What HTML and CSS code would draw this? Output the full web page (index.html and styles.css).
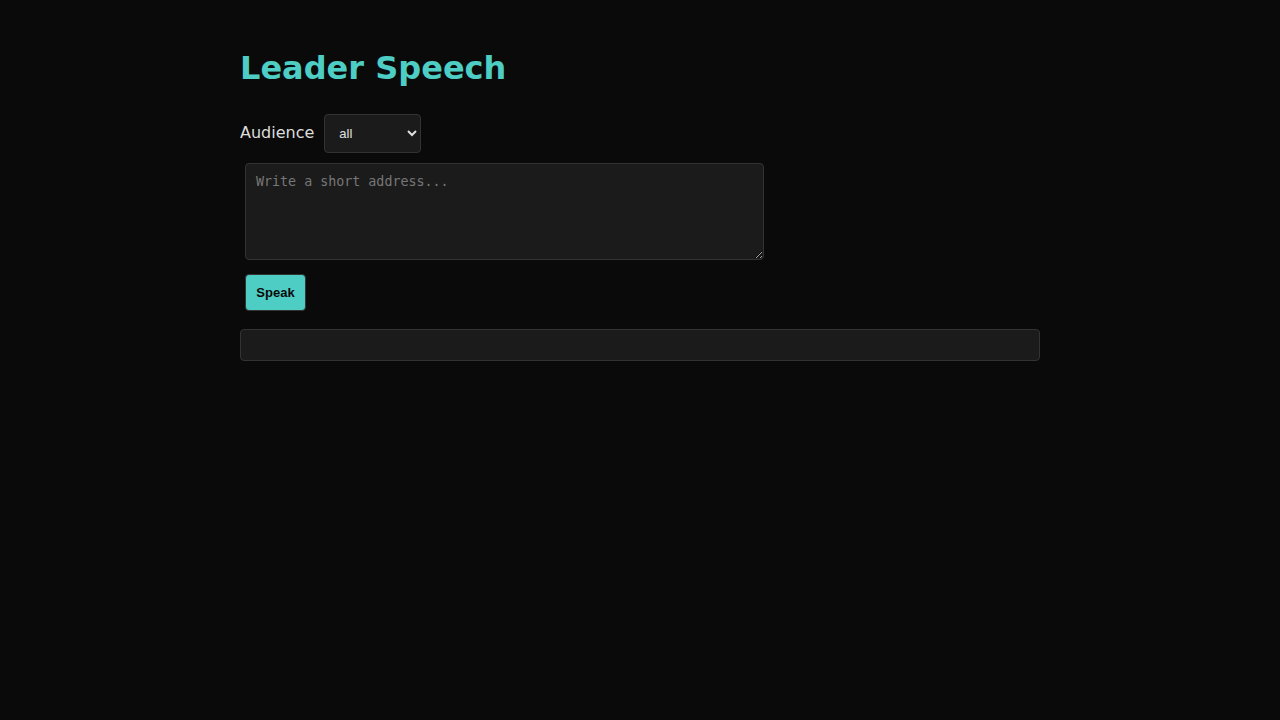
FILE: index.html
```html
<!DOCTYPE html>
<html>
<head>
<meta charset="utf-8">
<title>Leader Speech</title>
<link rel="stylesheet" href="styles.css">
</head>
<body>
<main class="page">
  <h1 class="title">Leader Speech</h1>
  <div class="row">
    <label class="label" for="aud">Audience</label>
    <select id="aud" class="select">
      <option>all</option>
      <option>allies</option>
      <option>citizens</option>
    </select>
  </div>
  <textarea class="input" placeholder="Write a short address..."></textarea>
  <button class="btn">Speak</button>
  <div class="output"></div>
</main>
</body>
</html>
```
FILE: styles.css
```css
html, body {
  margin: 0;
  background: #0a0a0a;
  color: #dddddd;
  font-family: "DejaVu Sans", sans-serif;
}
.page {
  width: 800px;
  margin: 0 auto;
  padding-top: 50px;
  display: flex;
  flex-direction: column;
  align-items: flex-start;
}
.title {
  margin: 0;
  font-size: 32px;
  line-height: 37px;
  font-weight: bold;
  color: #4ecdc4;
}
.row {
  margin-top: 27px;
  display: flex;
  align-items: center;
  gap: 10px;
}
.label {
  font-size: 16px;
  color: #dddddd;
  padding-bottom: 2px;
}
.select {
  box-sizing: border-box;
  width: 97px;
  height: 39px;
  padding: 0 10px 0 10px;
  background: #1b1b1b;
  color: #e0e0e0;
  border: 1px solid #333;
  border-radius: 4px;
  font-family: "Liberation Sans", Arial, sans-serif;
  font-size: 13px;
}
.input {
  box-sizing: border-box;
  margin: 10px 0 0 5px;
  width: 519px;
  height: 97px;
  padding: 10px;
  background: #1b1b1b;
  color: #dddddd;
  border: 1px solid #333;
  border-radius: 4px;
  font-family: "DejaVu Sans Mono", monospace;
  font-size: 13.33px;
}
.input::placeholder {
  color: #777;
}
.btn {
  box-sizing: border-box;
  margin: 14px 0 0 5px;
  width: 61px;
  height: 37px;
  padding: 0;
  background: #4ecdc4;
  color: #0a0a0a;
  border: 1px solid #333;
  border-radius: 4px;
  font-family: "Liberation Sans", Arial, sans-serif;
  font-size: 13px;
  font-weight: bold;
}
.output {
  box-sizing: border-box;
  margin-top: 18px;
  width: 800px;
  height: 32px;
  background: #1b1b1b;
  border: 1px solid #333;
  border-radius: 4px;
}
```
